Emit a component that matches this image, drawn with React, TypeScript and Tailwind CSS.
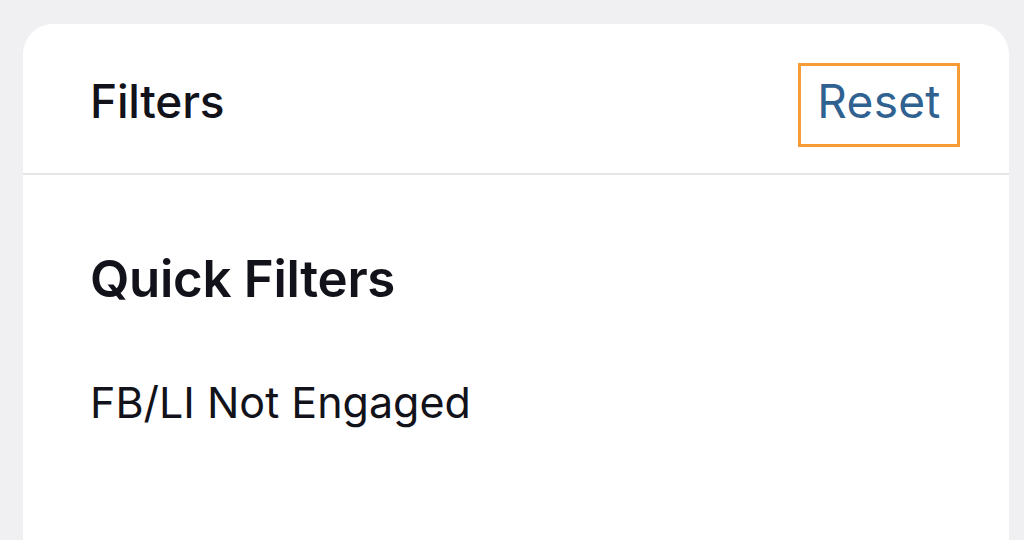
import React from 'react';

export default function App() {
  return (
    <div className="min-h-screen bg-[#f0f0f2] pt-[24px] pl-[23px] pr-[15px] font-['Inter',sans-serif]">
      <div className="bg-white rounded-t-[30px] h-[520px] flex flex-col">
        {/* header */}
        <div className="h-[151px] flex items-start justify-between pl-[67px] pr-[49px] border-b-2 border-[#e5e5e8]">
          <h1 className="mt-[43px] text-[46px] font-medium text-[#12121a] tracking-[-0.2px]">Filters</h1>
          <button className="mt-[39px] w-[162px] h-[84px] border-[3px] border-[#f79c32] flex items-start justify-center pt-[1px] text-[46px] text-[#2f6191] tracking-[0.3px]">
            Reset
          </button>
        </div>

        {/* body */}
        <div className="pl-[67px] pt-[78px]">
          <h2 className="text-[51px] font-semibold text-[#12121a] leading-none tracking-[-0.3px]">Quick Filters</h2>
          <p className="mt-[77px] text-[43px] text-[#12121a] leading-none">FB/LI Not Engaged</p>
        </div>
      </div>
    </div>
  );
}
